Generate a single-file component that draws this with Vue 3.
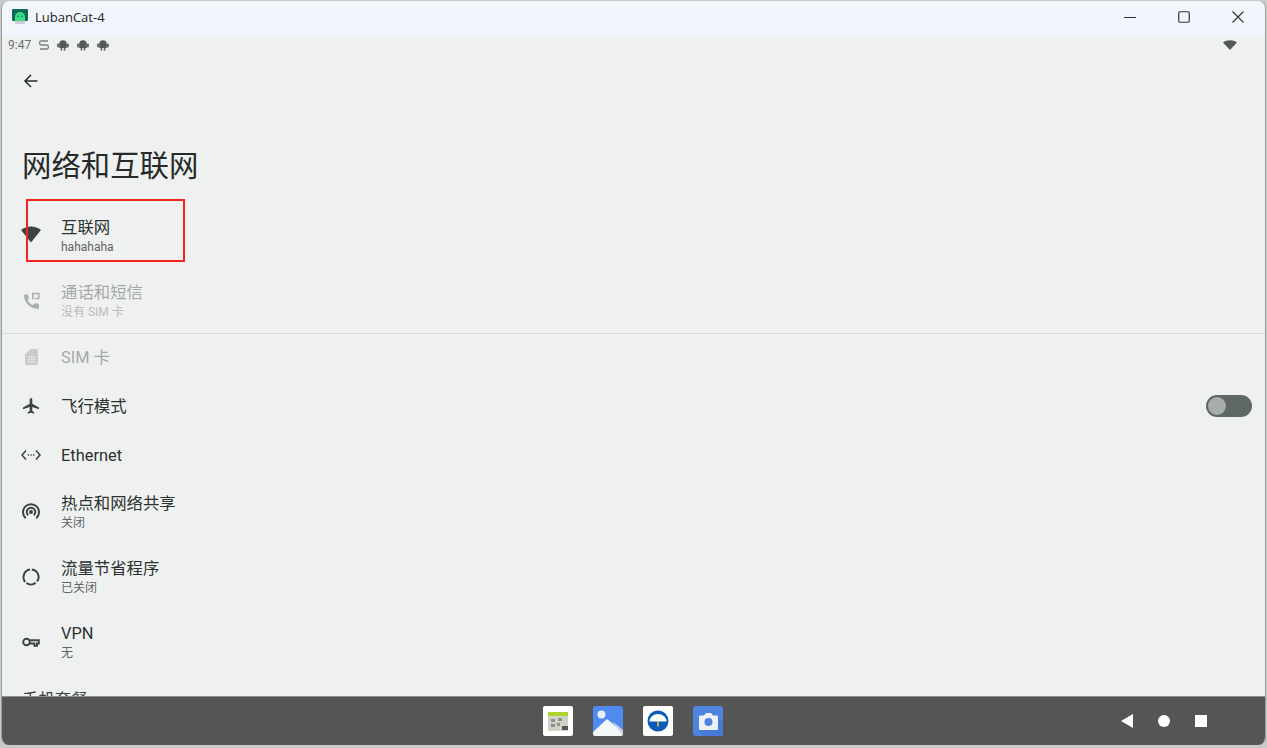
<template>
  <div class="window">
    <header class="titlebar">
      <svg class="app-icon" viewBox="0 0 16 16" width="16" height="16">
        <rect x="0" y="0" width="16" height="12" rx="1" fill="#0b6b58" />
        <path d="M3 8a5 5 0 0 1 10 0v4H3z" fill="#3ddc84" />
        <circle cx="5.8" cy="7.2" r=".8" fill="#0b6b58" />
        <circle cx="10.2" cy="7.2" r=".8" fill="#0b6b58" />
        <rect x="3" y="12" width="10" height="3" fill="#c9ccd2" />
      </svg>
      <span class="app-name">LubanCat-4</span>
      <div class="win-buttons">
        <svg viewBox="0 0 12 12" width="12" height="12"><path d="M0 6.500h12" stroke="#333" fill="none" /></svg>
        <svg viewBox="0 0 12 12" width="12" height="12"><rect x=".75" y=".75" width="10.5" height="10.5" rx="1.2" stroke="#333" stroke-width="1.2" fill="none" /></svg>
        <svg viewBox="0 0 12 12" width="12" height="12"><path d="M.5 .5l11 11M11.500 .5l-11 11" stroke="#333" stroke-width="1.1" fill="none" /></svg>
      </div>
    </header>

    <div class="statusbar">
      <span class="clock">9:47</span>
      <svg class="s-icon" viewBox="0 0 10 12" width="10" height="12"><path d="M9 2H2.500a1.500 1.500 0 0 0 0 4h5a1.500 1.500 0 0 1 0 4H1" stroke="#7b7f7f" stroke-width="1.300" fill="none" /></svg>
      <svg v-for="n in 3" :key="n" class="droid" viewBox="0 0 12 12" width="12" height="12">
        <path d="M2.200 5a3.800 3.800 0 0 1 7.600 0v4H8.300v2.500H6.800V9H5.200v2.500H3.700V9H2.200z" fill="#555958" />
        <rect x=".2" y="4.500" width="1.700" height="4" rx=".8" fill="#555958" />
        <rect x="10.100" y="4.500" width="1.700" height="4" rx=".8" fill="#555958" />
      </svg>
      <svg class="status-wifi" viewBox="0 0 14 10" width="14" height="10"><path d="M0 2.500C3.500-.5 10.500-.5 14 2.500L7 10z" fill="#555958" /></svg>
    </div>

    <main class="content">
      <div class="toolbar">
        <svg viewBox="0 0 16 16" width="16" height="16"><path d="M14.500 8H2M8 2L2 8l6 6" stroke="#2b2f2f" stroke-width="1.600" fill="none" /></svg>
      </div>
      <h1 class="page-title">网络和互联网</h1>

      <div class="list">
        <template v-for="item in items" :key="item.title">
          <div class="divider" v-if="item.divider"></div>
          <div class="row" :class="{ tall: item.sub, off: item.off }">
            <svg class="row-icon" viewBox="0 0 24 24" width="24" height="24">
              <path v-if="item.icon === 'wifi'" d="M2 6C7.500 1.300 16.500 1.300 22 6L12 18.500z" fill="#3c4343" />
              <g v-else-if="item.icon === 'phone'">
                <path d="M8.500 11c1.100 2.200 3 4.100 5.200 5.200l1.800-1.800c.2-.2.500-.3.800-.2.900.3 1.900.5 2.900.5.500 0 .8.300.8.800V19c0 .5-.3.800-.8.800C11 19.800 5 13.800 5 6.300c0-.5.300-.8.800-.8h2.700c.5 0 .8.300.8.800 0 1 .2 2 .5 2.900.1.300 0 .6-.2.800z" fill="#3c4343" />
                <path d="M13.800 10.500V4.500h6v5h-4" fill="none" stroke="#3c4343" stroke-width="1.500" />
              </g>
              <g v-else-if="item.icon === 'sim'">
                <path d="M11.500 4H17a2 2 0 0 1 2 2v12a2 2 0 0 1-2 2H8a2 2 0 0 1-2-2V9.500z" fill="#3c4343" opacity=".55" />
                <path d="M9.500 12h1.500M12 12h1.500M14.500 12H16M9.500 14.500h1.500M12 14.500h1.500M14.500 14.500H16M9.500 17h1.500M12 17h1.500M14.500 17H16" stroke="#eff1f0" stroke-width="1.300" fill="none" />
              </g>
              <path v-else-if="item.icon === 'plane'" d="M12 4c.8 0 1.300.9 1.300 1.800v3.900L20 13.500v1.700l-6.700-2.100v3.900l1.900 1.300V19.700L12 18.800l-3.200.9v-1.400l1.900-1.300v-3.900L4 15.200v-1.700l6.700-3.800V5.800C10.700 4.900 11.200 4 12 4z" fill="#3c4343" />
              <g v-else-if="item.icon === 'ethernet'" fill="none" stroke="#3c4343" stroke-width="1.500">
                <path d="M7 7.500L3 12l4 4.500M17 7.500l4 4.500-4 4.500" />
                <path d="M8.700 12h1.300M11.350 12h1.300M14 12h1.300" />
              </g>
              <g v-else-if="item.icon === 'hotspot'" fill="none" stroke="#3c4343" stroke-width="2">
                <path d="M6.700 18.200a8 8 0 1 1 10.600 0" />
                <path d="M9.200 15.300a4.300 4.300 0 1 1 5.600 0" />
                <circle cx="12" cy="12" r="1" fill="#3c4343" />
              </g>
              <path v-else-if="item.icon === 'saver'" d="M11 4.600A7.500 7.500 0 0 0 6.200 16.800M12.800 4.500a7.500 7.500 0 0 1 5.300 11.900M7.400 18a7.500 7.500 0 0 0 9.300-.3" fill="none" stroke="#3c4343" stroke-width="2" />
              <g v-else-if="item.icon === 'key'" fill="none" stroke="#3c4343" stroke-width="1.900">
                <circle cx="7.500" cy="12" r="3.300" />
                <path d="M11 10.200h8.800v3.300h-1.800v2.300h-2.500v-2.300H11" />
              </g>
            </svg>
            <div class="row-text">
              <div class="row-title">{{ item.title }}</div>
              <div class="row-sub" v-if="item.sub">{{ item.sub }}</div>
            </div>
            <div class="switch" v-if="item.toggle"><span class="knob"></span></div>
          </div>
        </template>
        <div class="row-cut">手机套餐</div>
      </div>

      <div class="highlight"></div>
    </main>

    <footer class="navbar">
      <div class="dock">
        <div class="dock-app white">
          <svg viewBox="0 0 30 30" width="30" height="30">
            <rect x="5" y="6" width="20" height="4" fill="#aed42f" />
            <rect x="5" y="10" width="20" height="15" fill="#cfd3c8" />
            <path d="M8 13h4v3H8zM15 12h4v3h-4zM8 18h4v3H8zM14 17h3v3h-3z" fill="#8d938b" />
            <rect x="19" y="20" width="6" height="4" fill="#55594f" />
          </svg>
        </div>
        <div class="dock-app photos">
          <svg viewBox="0 0 30 30" width="30" height="30">
            <rect width="30" height="30" rx="2" fill="#4f8bee" />
            <circle cx="8.500" cy="8.500" r="4" fill="#e8eefb" />
            <path d="M0 30v-4L14 13l16 13v4z" fill="#f4f6f8" />
            <path d="M19 15l11 9v6L24 22z" fill="#cfd3d6" />
          </svg>
        </div>
        <div class="dock-app white">
          <svg viewBox="0 0 30 30" width="30" height="30">
            <circle cx="15" cy="15" r="10.500" fill="#0a5cb8" />
            <path d="M6.500 15.500a8.500 7.500 0 0 1 17 0z" fill="#fff" />
            <path d="M15 15.500v5" stroke="#f4c430" stroke-width="1.500" />
          </svg>
        </div>
        <div class="dock-app camera">
          <svg viewBox="0 0 30 30" width="30" height="30">
            <rect width="30" height="30" rx="2" fill="#4f83e0" />
            <path d="M22 9l8 8v13H12l-6-6z" fill="#467ad6" />
            <path d="M7 9.500h4l2-2.500h5l2 2.500h4a1 1 0 0 1 1 1V23a1 1 0 0 1-1 1H7a1 1 0 0 1-1-1V10.500a1 1 0 0 1 1-1z" fill="#edf1f8" />
            <circle cx="15.500" cy="16" r="4" fill="#4f83e0" />
          </svg>
        </div>
      </div>
      <div class="nav-keys">
        <svg viewBox="0 0 12 14" width="12" height="14"><path d="M12 0v14L0 7z" fill="#fff" /></svg>
        <span class="nav-dot"></span>
        <span class="nav-square"></span>
      </div>
    </footer>
  </div>
</template>

<script setup>
const items = [
  { title: '互联网', sub: 'hahahaha', icon: 'wifi' },
  { title: '通话和短信', sub: '没有 SIM 卡', icon: 'phone', off: true },
  { title: 'SIM 卡', icon: 'sim', off: true, divider: true },
  { title: '飞行模式', icon: 'plane', toggle: true },
  { title: 'Ethernet', icon: 'ethernet' },
  { title: '热点和网络共享', sub: '关闭', icon: 'hotspot' },
  { title: '流量节省程序', sub: '已关闭', icon: 'saver' },
  { title: 'VPN', sub: '无', icon: 'key' },
]
</script>

<style>
html,
body {
  margin: 0;
  background: #c8cac8;
}
</style>

<style scoped>
.window {
  box-sizing: border-box;
  width: 1265px;
  height: 744px;
  margin: 1px 0 0 1px;
  display: flex;
  flex-direction: column;
  border-radius: 8px;
  overflow: hidden;
  border-left: 1px solid #98a39c;
  border-right: 1px solid #98a39c;
  font-family: Roboto, "Noto Sans CJK SC", sans-serif;
  color: #2c3131;
}

.titlebar {
  height: 35px;
  flex: none;
  display: flex;
  align-items: center;
  box-sizing: border-box;
  padding-left: 10px;
  padding-bottom: 4px;
  background: #f2f5fb;
}

.app-icon {
  margin-right: 7px;
}

.app-name {
  font-family: "Open Sans", sans-serif;
  font-size: 13px;
  color: #222;
}

.win-buttons {
  margin-left: auto;
  display: flex;
  gap: 42px;
  padding-right: 21px;
}

.statusbar {
  height: 20px;
  flex: none;
  display: flex;
  align-items: center;
  box-sizing: border-box;
  gap: 8px;
  padding-left: 6px;
  padding-right: 28px;
  padding-bottom: 2px;
  background: #eff1f0;
}

.clock {
  font-size: 12px;
  color: #6a6f6f;
}

.status-wifi {
  margin-left: auto;
}

.content {
  flex: 1;
  min-height: 0;
  position: relative;
  overflow: hidden;
  background: #eff1f0;
}

.toolbar {
  height: 52px;
  box-sizing: border-box;
  display: flex;
  align-items: center;
  padding-left: 21px;
  padding-bottom: 2px;
}

.page-title {
  margin: 0;
  height: 96px;
  padding-left: 20px;
  padding-top: 38px;
  box-sizing: border-box;
  font-size: 29.4px;
  line-height: 40px;
  font-weight: 400;
  color: #262a2a;
}

.row {
  height: 49px;
  display: flex;
  align-items: center;
  padding-left: 17px;
  padding-right: 13px;
}

.row.tall {
  height: 65px;
}

.row.off {
  opacity: 0.38;
}

.row-icon {
  flex: none;
  margin-top: -2px;
}

.row-text {
  margin-left: 18px;
  flex: 1;
}

.row-title {
  font-size: 16.4px;
  line-height: 22px;
}

.row-sub {
  font-size: 12px;
  line-height: 17px;
  color: #5f6565;
}

.divider {
  height: 1px;
  margin-top: -1px;
  margin-bottom: -1px;
  background: #d8dada;
}

.switch {
  width: 46px;
  height: 22px;
  margin-top: -2px;
  border-radius: 11px;
  background: #5f6867;
  display: flex;
  align-items: center;
  padding-left: 2px;
  box-sizing: border-box;
}

.knob {
  width: 18px;
  height: 18px;
  border-radius: 50%;
  background: #a6adab;
}

.row-cut {
  margin-top: 14px;
  padding-left: 20px;
  font-size: 16.4px;
  line-height: 22px;
  color: #3c4343;
}

.highlight {
  position: absolute;
  left: 24px;
  top: 143px;
  width: 155px;
  height: 59px;
  border: 2px solid #f5231f;
}

.navbar {
  height: 49px;
  flex: none;
  position: relative;
  display: flex;
  align-items: center;
  justify-content: center;
  background: #555555;
  border-top: 1px solid #8b9290;
  box-sizing: border-box;
}

.dock {
  display: flex;
  gap: 20px;
  margin-right: 2px;
  margin-bottom: 1px;
}

.dock-app {
  width: 30px;
  height: 30px;
  border-radius: 2px;
  overflow: hidden;
}

.white {
  background: #fff;
}

.nav-keys {
  position: absolute;
  right: 58px;
  top: 17px;
  display: flex;
  align-items: center;
  gap: 25px;
}

.nav-dot {
  width: 12px;
  height: 12px;
  border-radius: 50%;
  background: #fff;
}

.nav-square {
  width: 12px;
  height: 12px;
  background: #fff;
}
</style>
